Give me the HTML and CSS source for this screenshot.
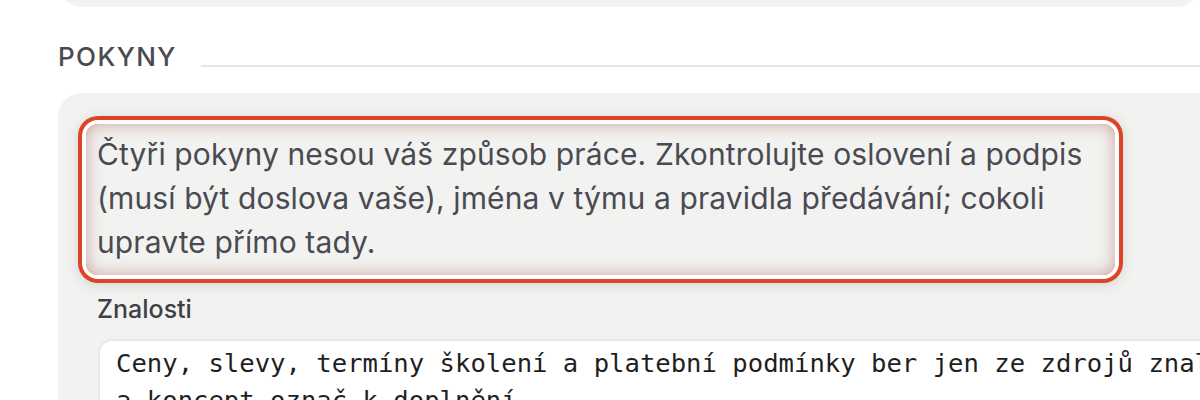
FILE: index.html
```html
<!DOCTYPE html>
<html lang="cs">
<head>
<meta charset="utf-8">
<title>Pokyny</title>
<link rel="stylesheet" href="styles.css">
</head>
<body>
<div class="prev-card"></div>
<section class="section">
  <div class="section-head">
    <h2 class="section-title">POKYNY</h2>
    <span class="section-rule"></span>
  </div>
  <div class="card">
    <p class="note">Čtyři pokyny nesou váš způsob práce. Zkontrolujte oslovení a podpis (musí být doslova vaše), jména v týmu a pravidla předávání; cokoli upravte přímo tady.</p>
    <label class="field-label">Znalosti</label>
    <div class="textarea">Ceny, slevy, termíny školení a platební podmínky ber jen ze zdrojů znalostí;
a koncept označ k doplnění.</div>
  </div>
</section>
</body>
</html>
```
FILE: styles.css
```css
html, body {
  margin: 0;
  background: #ffffff;
  overflow: hidden;
}
body {
  font-family: Inter, "Noto Sans", sans-serif;
  width: 1200px;
  height: 400px;
}
.prev-card {
  height: 60px;
  margin: -53px 0 0 58px;
  background: #f2f2f0;
  border-radius: 24px;
}
.section-head {
  display: flex;
  align-items: flex-end;
  gap: 24px;
  padding-left: 58px;
  margin-top: 37px;
}
.section-title {
  margin: 0;
  font-size: 26px;
  line-height: 1;
  font-weight: 500;
  letter-spacing: 1.4px;
  color: #4a4a50;
}
.section-rule {
  flex: 1;
  height: 2px;
  margin-bottom: 3px;
  background: #e6e6e6;
}
.card {
  margin: 23px -80px 0 58px;
  padding: 31px 0 40px 28px;
  background: #f2f2f0;
  border-radius: 24px;
}
.note {
  width: 1029px;
  box-sizing: border-box;
  margin: 0;
  padding: 8px 11px 11px;
  font-size: 30px;
  letter-spacing: 0.12px;
  line-height: 44px;
  color: #4a4a52;
  border-radius: 12px;
  box-shadow:
    inset 0 0 16px rgba(170, 85, 70, 0.5),
    0 0 0 4px #ffffff,
    0 0 0 8px #df4327,
    0 2px 14px 8px rgba(0, 0, 0, 0.12);
}
.field-label {
  display: block;
  margin: 18px 0 0 11px;
  font-size: 25px;
  line-height: 1.3;
  font-weight: 500;
  color: #3f3f45;
}
.textarea {
  margin: 13px 0 0 12px;
  padding: 4px 16px 10px;
  background: #ffffff;
  border: 2px solid #e8e8e8;
  border-radius: 14px;
  font-family: "DejaVu Sans Mono", "Liberation Mono", monospace;
  font-size: 25.6px;
  line-height: 37px;
  color: #1f1f1f;
  white-space: pre;
}
```
